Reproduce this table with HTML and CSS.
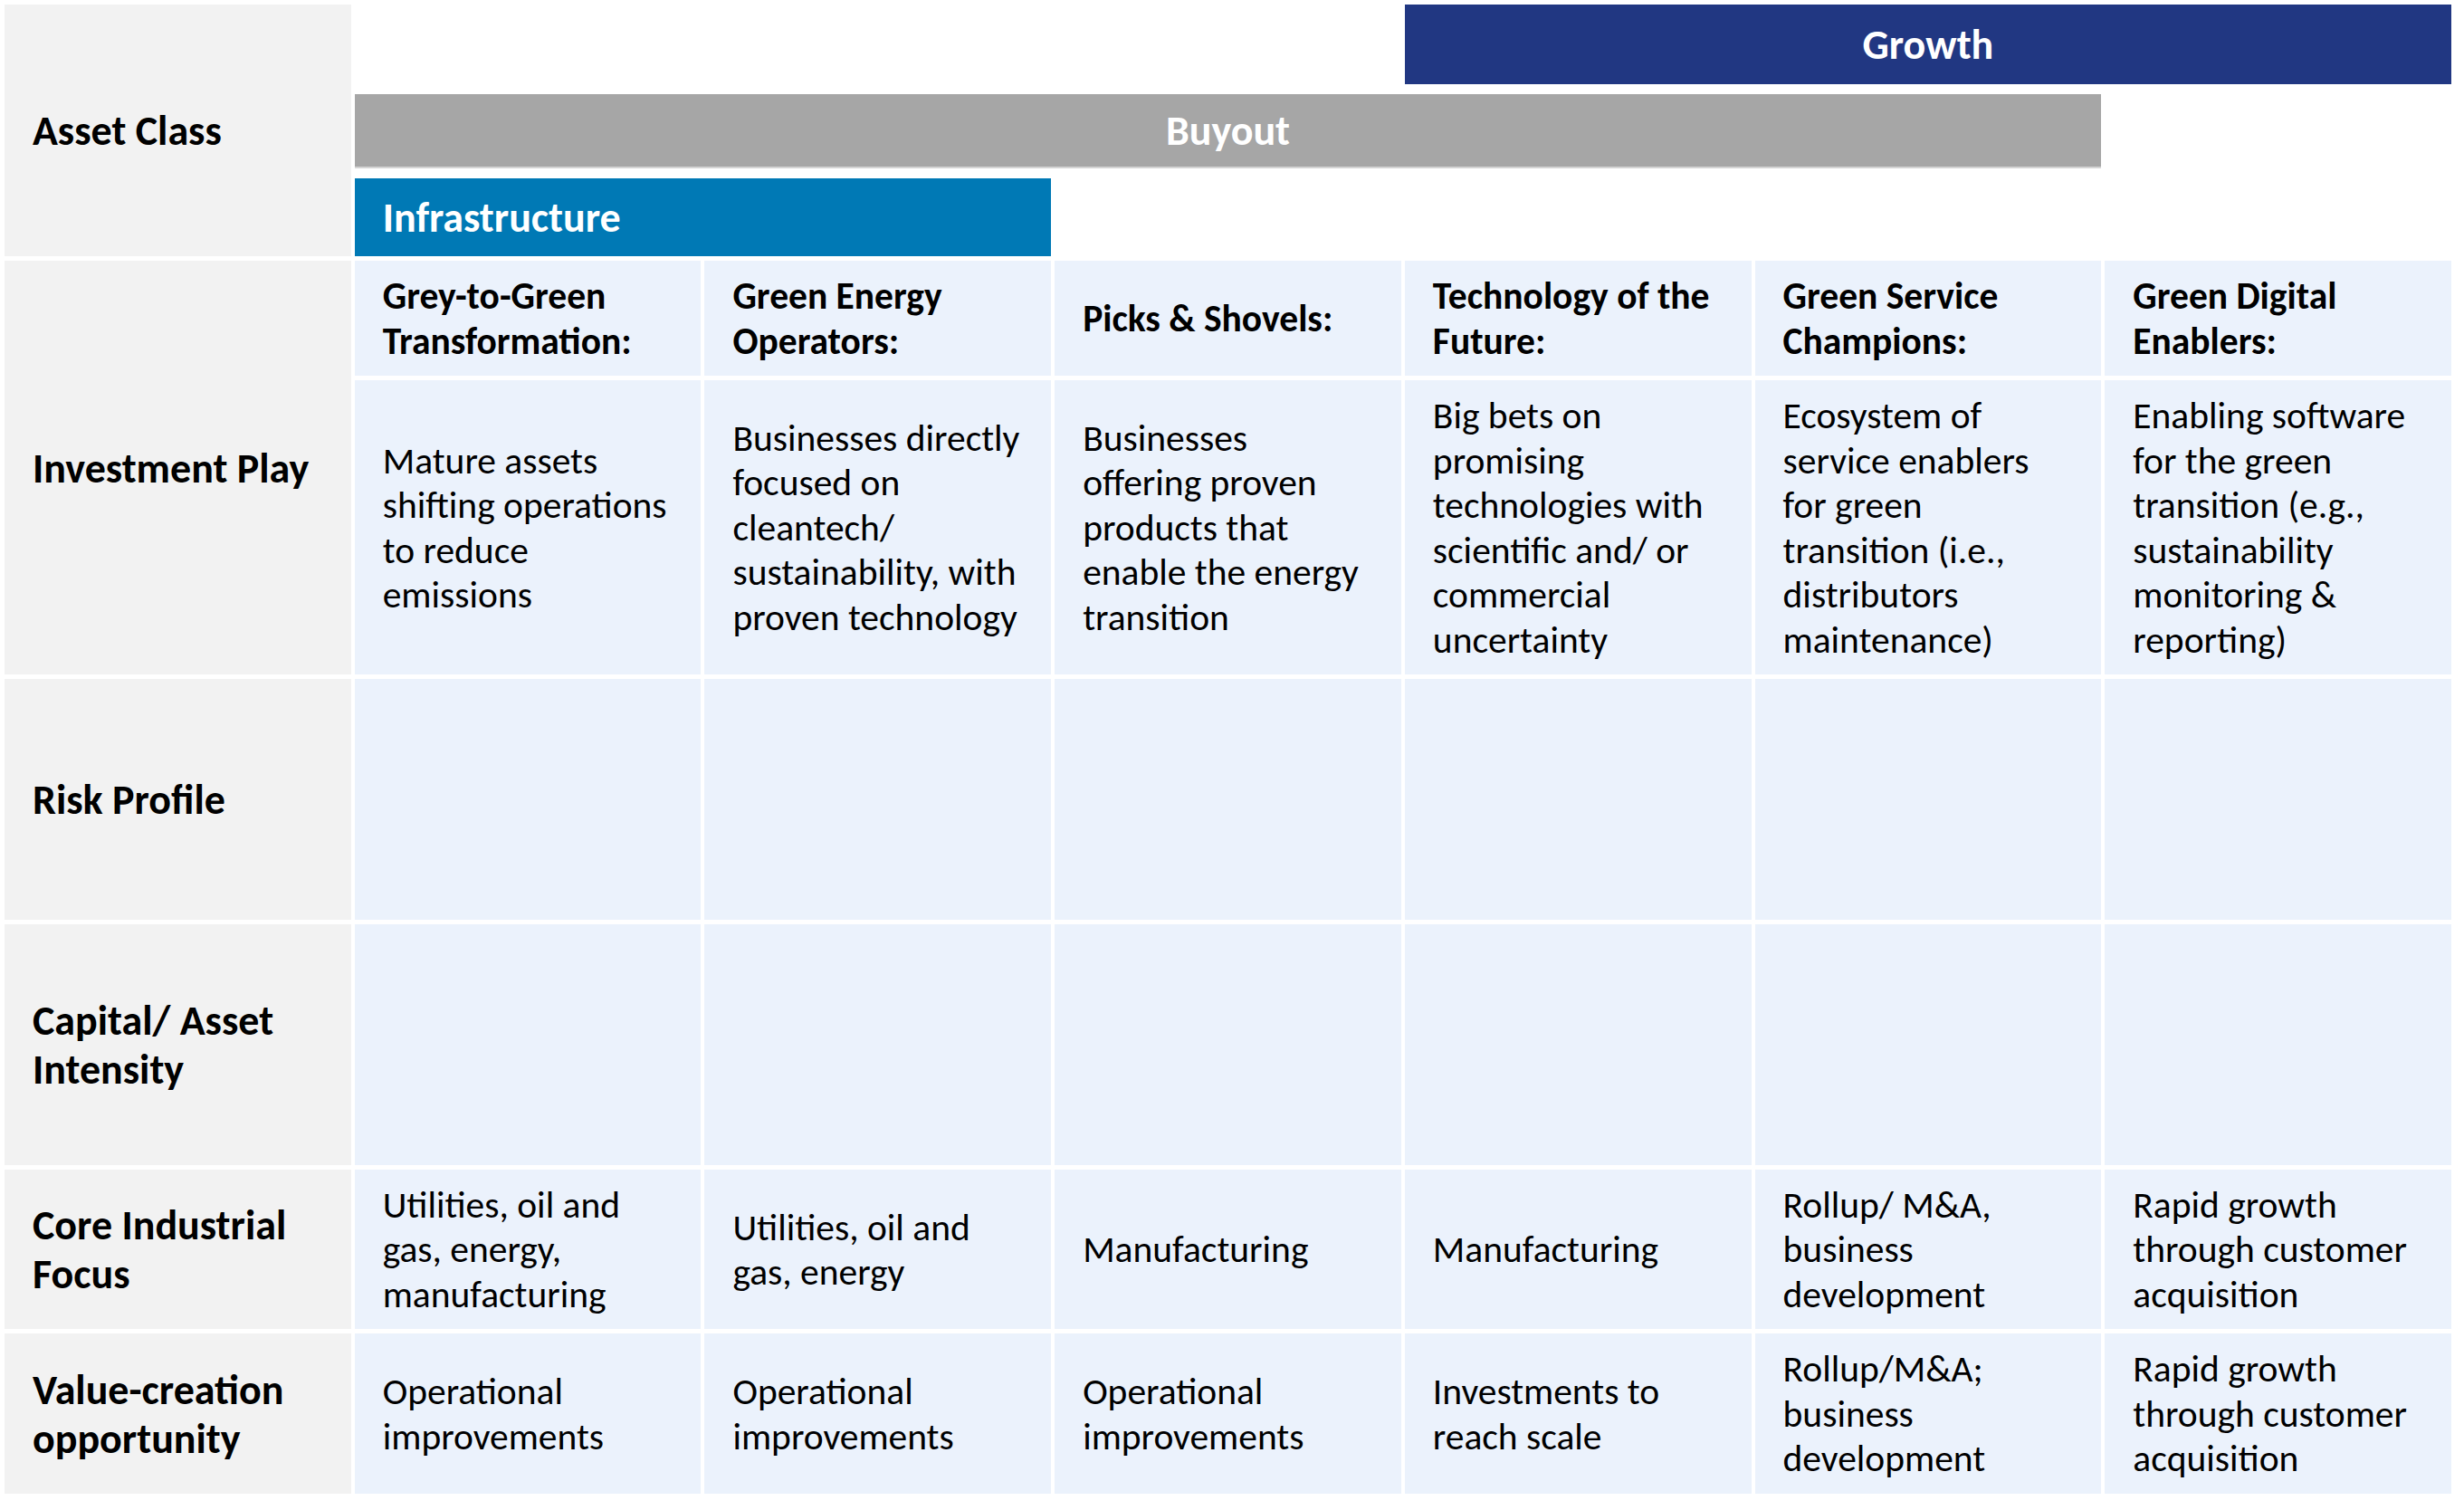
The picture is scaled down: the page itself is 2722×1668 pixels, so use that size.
FILE: index.html
```html
<!DOCTYPE html>
<html lang="en">
<head>
<meta charset="utf-8">
<title>Investment plays by asset class</title>
<link rel="stylesheet" href="styles.css">
</head>
<body>
<div class="matrix">
  <div class="label label-top">Asset Class</div>
  <div class="bands">
    <div class="band band-growth">Growth</div>
    <div class="band band-buyout">Buyout</div>
    <div class="band band-infra">Infrastructure</div>
  </div>

  <div class="label label-play">Investment Play</div>
  <div class="cell head">Grey-to-Green<br>Transformation:</div>
  <div class="cell head">Green Energy<br>Operators:</div>
  <div class="cell head">Picks &amp; Shovels:</div>
  <div class="cell head">Technology of the<br>Future:</div>
  <div class="cell head">Green Service<br>Champions:</div>
  <div class="cell head">Green Digital<br>Enablers:</div>

  <div class="cell">Mature assets<br>shifting operations<br>to reduce<br>emissions</div>
  <div class="cell">Businesses directly<br>focused on<br>cleantech/<br>sustainability, with<br>proven technology</div>
  <div class="cell">Businesses<br>offering proven<br>products that<br>enable the energy<br>transition</div>
  <div class="cell">Big bets on<br>promising<br>technologies with<br>scientific and/ or<br>commercial<br>uncertainty</div>
  <div class="cell">Ecosystem of<br>service enablers<br>for green<br>transition (i.e.,<br>distributors<br>maintenance)</div>
  <div class="cell">Enabling software<br>for the green<br>transition (e.g.,<br>sustainability<br>monitoring &amp;<br>reporting)</div>

  <div class="label">Risk Profile</div>
  <div class="cell"></div>
  <div class="cell"></div>
  <div class="cell"></div>
  <div class="cell"></div>
  <div class="cell"></div>
  <div class="cell"></div>

  <div class="label">Capital/ Asset<br>Intensity</div>
  <div class="cell"></div>
  <div class="cell"></div>
  <div class="cell"></div>
  <div class="cell"></div>
  <div class="cell"></div>
  <div class="cell"></div>

  <div class="label">Core Industrial<br>Focus</div>
  <div class="cell">Utilities, oil and<br>gas, energy,<br>manufacturing</div>
  <div class="cell">Utilities, oil and<br>gas, energy</div>
  <div class="cell">Manufacturing</div>
  <div class="cell">Manufacturing</div>
  <div class="cell">Rollup/ M&amp;A,<br>business<br>development</div>
  <div class="cell">Rapid growth<br>through customer<br>acquisition</div>

  <div class="label">Value-creation<br>opportunity</div>
  <div class="cell">Operational<br>improvements</div>
  <div class="cell">Operational<br>improvements</div>
  <div class="cell">Operational<br>improvements</div>
  <div class="cell">Investments to<br>reach scale</div>
  <div class="cell">Rollup/M&amp;A;<br>business<br>development</div>
  <div class="cell">Rapid growth<br>through customer<br>acquisition</div>
</div>
</body>
</html>
```
FILE: styles.css
```css
html, body {
  margin: 0;
  background: #ffffff;
}

body {
  padding: 5px;
  font-family: Carlito, Lato, "Liberation Sans", sans-serif;
  color: #000000;
}

.matrix {
  width: 2703px;
  display: grid;
  grid-template-columns: repeat(7, 1fr);
  grid-template-rows: 278px 127px 325px 266px 266px 176px 177px;
  column-gap: 4px;
  row-gap: 5px;
}

.label {
  background: #f2f2f2;
  display: flex;
  align-items: center;
  padding: 0 12px 0 31px;
  font-weight: 700;
  font-size: 46px;
  line-height: 54px;
}

.label-play {
  grid-row: span 2;
}

.bands {
  grid-column: 2 / span 6;
  display: grid;
  grid-template-columns: repeat(6, 1fr);
  grid-template-rows: 88px 82px 86px;
  column-gap: 4px;
  row-gap: 11px;
}

.band {
  display: flex;
  align-items: center;
  color: #ffffff;
  font-weight: 700;
  font-size: 46px;
  line-height: 54px;
}

.band-growth {
  grid-row: 1;
  grid-column: 4 / span 3;
  background: #213782;
  justify-content: center;
}

.band-buyout {
  grid-row: 2;
  grid-column: 1 / span 5;
  background: #a6a6a6;
  border-bottom: 2px solid #d4d4d4;
  justify-content: center;
}

.band-infra {
  grid-row: 3;
  grid-column: 1 / span 2;
  background: #0079b5;
  padding-left: 31px;
}

.cell {
  background: #ebf2fc;
  display: flex;
  align-items: center;
  padding: 0 10px 0 31px;
  font-size: 41.5px;
  line-height: 49.5px;
}

.cell.head {
  font-weight: 700;
}
```
